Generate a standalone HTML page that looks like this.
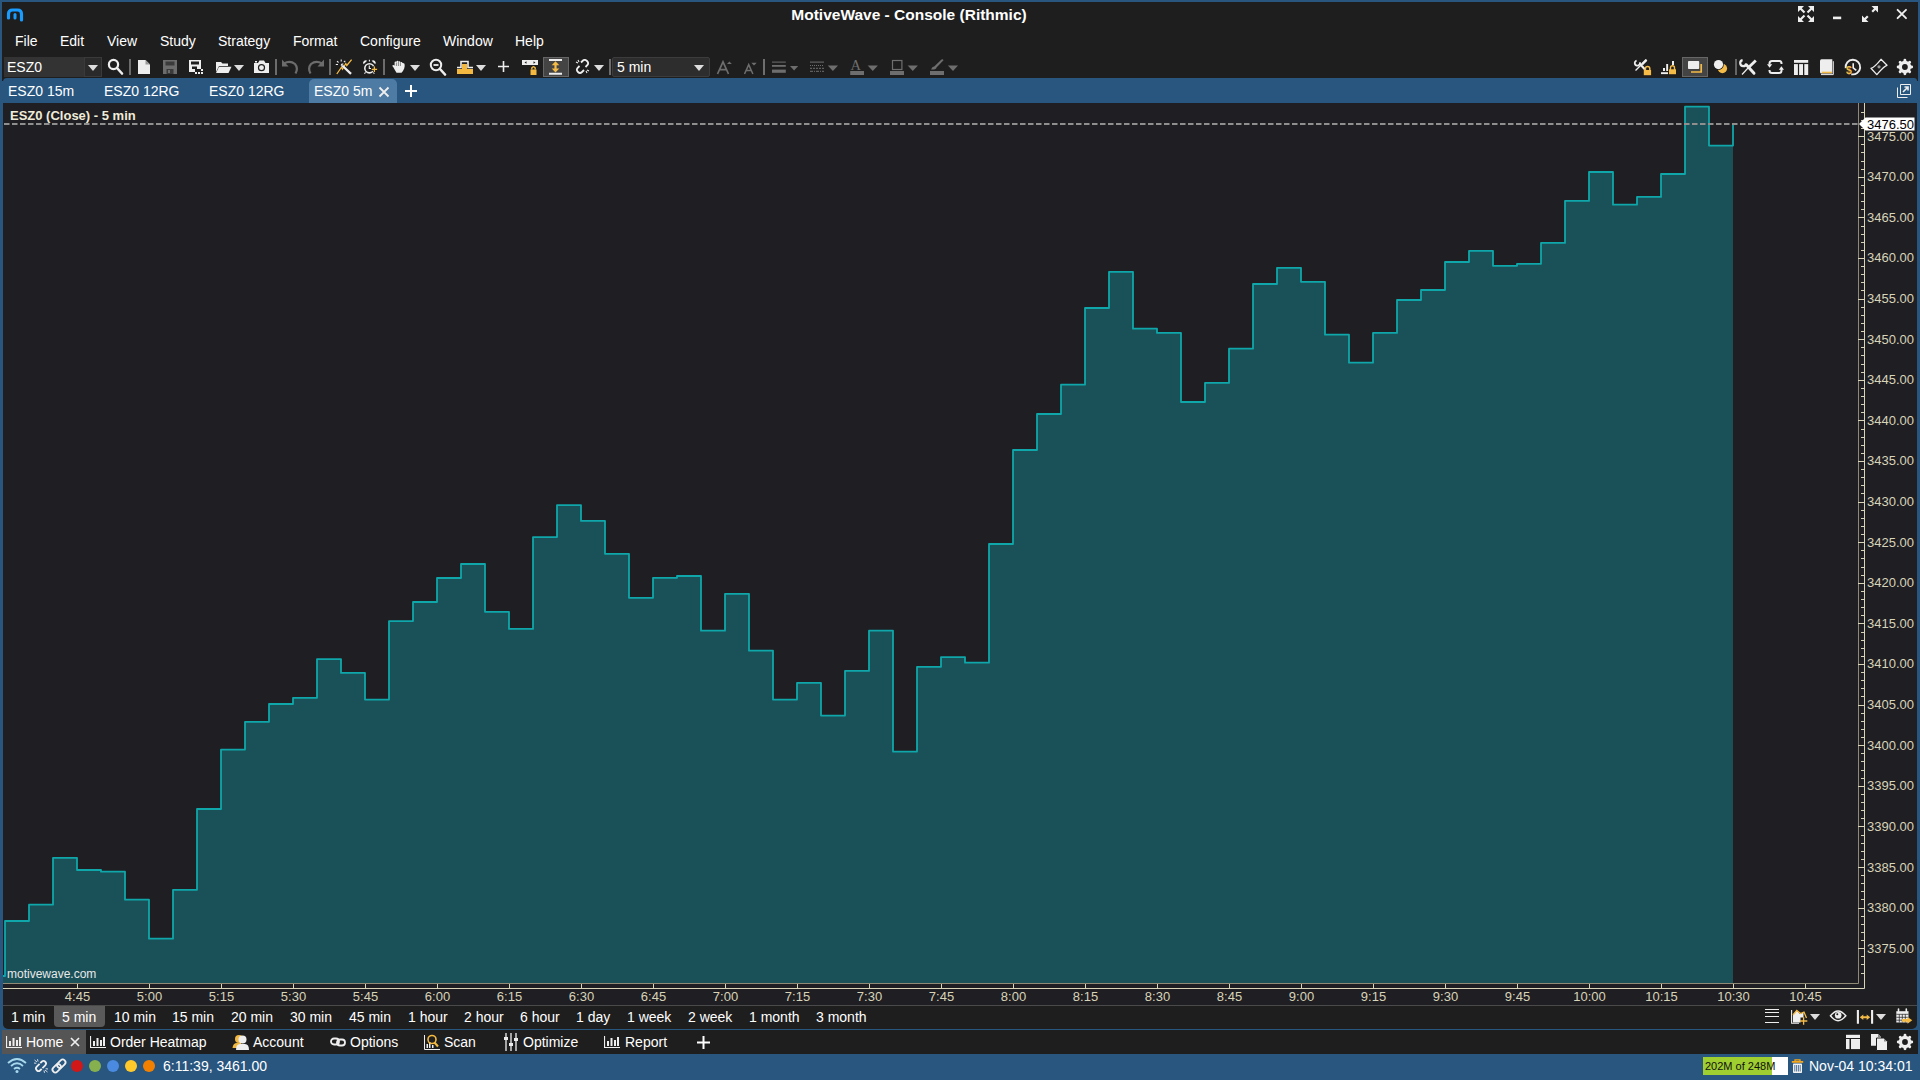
<!DOCTYPE html>
<html><head><meta charset="utf-8"><style>
html,body{margin:0;padding:0;}
body{width:1920px;height:1080px;overflow:hidden;background:#28567f;position:relative;font-family:'Liberation Sans', sans-serif;}
.t{position:absolute;white-space:nowrap;}
.b{position:absolute;}
</style></head><body>
<div class="b" style="left:2px;top:2px;width:1916px;height:79px;background:#1e1e1e;"></div>
<div class="b" style="left:3px;top:78px;width:1914px;height:25px;background:#28567f;border-top-left-radius:4px;border-top-right-radius:3px;"></div>
<div class="b" style="left:3px;top:103px;width:1914px;height:902px;background:#1f1e23;"></div>
<div class="b" style="left:3px;top:1005px;width:1914px;height:24px;background:#1e1e1e;border-bottom-left-radius:5px;border-bottom-right-radius:5px;border-top:1px solid #4a4a4a;box-sizing:border-box;"></div>
<div class="b" style="left:2px;top:1030px;width:1916px;height:24px;background:#1e1e1e;"></div>
<svg class="b" style="left:6px;top:8px" width="18" height="15" viewBox="0 0 18 15"><path d="M2.5 10 V6 Q2.5 2 6.5 2 H11.5 Q15.5 2 15.5 6 V12" fill="none" stroke="#1a9cff" stroke-width="3.2" stroke-linecap="round"/><path d="M9 6.5 V10" stroke="#1a9cff" stroke-width="3" stroke-linecap="round"/></svg>
<div class="t" style="left:0;width:1818px;text-align:center;top:7px;font-size:15.5px;line-height:15.5px;font-weight:bold;color:#fff">MotiveWave - Console (Rithmic)</div>
<div class="t" style="left:15px;top:34px;font-size:14px;line-height:14px;color:#fff;">File</div>
<div class="t" style="left:60px;top:34px;font-size:14px;line-height:14px;color:#fff;">Edit</div>
<div class="t" style="left:107px;top:34px;font-size:14px;line-height:14px;color:#fff;">View</div>
<div class="t" style="left:160px;top:34px;font-size:14px;line-height:14px;color:#fff;">Study</div>
<div class="t" style="left:218px;top:34px;font-size:14px;line-height:14px;color:#fff;">Strategy</div>
<div class="t" style="left:293px;top:34px;font-size:14px;line-height:14px;color:#fff;">Format</div>
<div class="t" style="left:360px;top:34px;font-size:14px;line-height:14px;color:#fff;">Configure</div>
<div class="t" style="left:443px;top:34px;font-size:14px;line-height:14px;color:#fff;">Window</div>
<div class="t" style="left:515px;top:34px;font-size:14px;line-height:14px;color:#fff;">Help</div>
<div class="b" style="left:4px;top:57px;width:80px;height:20px;background:#333;"></div>
<div class="t" style="left:7px;top:60px;font-size:14px;line-height:14px;color:#fff;">ESZ0</div>
<div class="b" style="left:84px;top:57px;width:18px;height:20px;background:#2a2a2a;border:1px solid #3a3a3a;box-sizing:border-box;"></div>
<svg class="b" style="left:88px;top:65px" width="10" height="6" viewBox="0 0 10 6"><path d="M0 0H10L5 6z" fill="#ddd"/></svg>
<svg class="b" style="left:107px;top:58px" width="17" height="18" viewBox="0 0 17 18"><circle cx="6.5" cy="6.5" r="4.6" fill="none" stroke="#eee" stroke-width="2.2"/><path d="M10 10l5 5.5" stroke="#eee" stroke-width="2.6" stroke-linecap="round"/></svg>
<div class="b" style="left:129px;top:59px;width:2px;height:16px;background:#6c6c6c;"></div>
<svg class="b" style="left:137px;top:59px" width="14" height="16" viewBox="0 0 14 16"><path d="M1 1H8.5L13 5.5V15H1z" fill="#eee"/><path d="M8.5 1V5.5H13" fill="#999"/></svg>
<svg class="b" style="left:162px;top:59px" width="16" height="16" viewBox="0 0 16 16"><path d="M1 1H15V15H1z" fill="#6c6c6c"/><path d="M3.5 2.5H12.5V6.5H3.5z" fill="#3a3a3a"/><path d="M4.5 10H11.5V15H4.5z" fill="#3a3a3a"/><path d="M6 11H8V14H6z" fill="#6c6c6c"/></svg>
<svg class="b" style="left:188px;top:59px" width="16" height="16" viewBox="0 0 16 16"><path d="M1 1H13V10H1z" fill="#eee"/><path d="M3 2.5H11V5.5H3z" fill="#1e1e1e"/><path d="M4 7.5H9V10H4z" fill="#1e1e1e"/><path d="M1 10H7V13H1z" fill="#eee"/><rect x="7" y="13" width="2" height="2" fill="#eee"/><rect x="10" y="13" width="2" height="2" fill="#eee"/><rect x="13" y="13" width="2" height="2" fill="#eee"/><rect x="13" y="10" width="2" height="2" fill="#eee"/></svg>
<svg class="b" style="left:215px;top:60px" width="17" height="14" viewBox="0 0 17 14"><path d="M1 2H6L7.5 3.5H13V6H4L1 12z" fill="#eee"/><path d="M4 6.8H16.5L13.5 13H1z" fill="#eee"/></svg>
<svg class="b" style="left:234px;top:65px" width="10" height="6" viewBox="0 0 10 6"><path d="M0 0H10L5 6z" fill="#ddd"/></svg>
<svg class="b" style="left:253px;top:59px" width="17" height="15" viewBox="0 0 17 15"><path d="M1 4H5L6.5 1.5H11L12.5 4H16V14H1z" fill="#eee"/><circle cx="8.5" cy="8.7" r="3.6" fill="#1e1e1e"/><circle cx="8.5" cy="8.7" r="2.4" fill="#eee"/><rect x="2" y="2" width="2" height="1.5" fill="#eee"/></svg>
<div class="b" style="left:275px;top:59px;width:2px;height:16px;background:#6c6c6c;"></div>
<svg class="b" style="left:281px;top:58px" width="18" height="18" viewBox="0 0 18 18"><path d="M3 5.5Q9 2 14 6Q17.5 10 14.5 15.5" fill="none" stroke="#6c6c6c" stroke-width="2.2"/><path d="M1 1.5V8.5H7.5z" fill="#6c6c6c"/></svg>
<svg class="b" style="left:307px;top:58px" width="18" height="18" viewBox="0 0 18 18"><path d="M15 5.5Q9 2 4 6Q0.5 10 3.5 15.5" fill="none" stroke="#6c6c6c" stroke-width="2.2"/><path d="M17 1.5V8.5H10.5z" fill="#6c6c6c"/></svg>
<div class="b" style="left:329px;top:59px;width:2px;height:16px;background:#6c6c6c;"></div>
<div class="b" style="left:383px;top:59px;width:2px;height:16px;background:#6c6c6c;"></div>
<svg class="b" style="left:410px;top:65px" width="10" height="6" viewBox="0 0 10 6"><path d="M0 0H10L5 6z" fill="#ddd"/></svg>
<svg class="b" style="left:429px;top:58px" width="18" height="18" viewBox="0 0 18 18"><circle cx="7" cy="7" r="5.2" fill="none" stroke="#eee" stroke-width="2"/><path d="M4.5 7H9.5" stroke="#eee" stroke-width="1.8"/><path d="M11 11L16 16.5" stroke="#eee" stroke-width="2.6" stroke-linecap="round"/></svg>
<svg class="b" style="left:456px;top:59px" width="18" height="16" viewBox="0 0 18 16"><path d="M1 8.5H5V2.5H12V8.5H17" fill="none" stroke="#eee" stroke-width="1.6"/><path d="M6 5H11V10H17V15H1V10H6z" fill="#f2b840"/></svg>
<svg class="b" style="left:476px;top:65px" width="10" height="6" viewBox="0 0 10 6"><path d="M0 0H10L5 6z" fill="#ddd"/></svg>
<svg class="b" style="left:497px;top:60px" width="13" height="13" viewBox="0 0 13 13"><path d="M6.5 1V12M1 6.5H12" stroke="#eee" stroke-width="1.6"/></svg>
<svg class="b" style="left:521px;top:59px" width="18" height="17" viewBox="0 0 18 17"><path d="M1 1H17V6H1z" fill="#eee"/><path d="M3.5 3.5L5.5 2.3V4.7zM14.5 3.5L12.5 2.3V4.7z" fill="#1e1e1e"/><path d="M9.5 10.5H15.5V16H9.5z" fill="#f2b840"/><path d="M10.8 10.5V9Q12.5 6.5 14.2 9V10.5" fill="none" stroke="#f2b840" stroke-width="1.4"/></svg>
<div class="b" style="left:543px;top:57px;width:26px;height:20px;background:#444;border:1px solid #666;box-sizing:border-box;"></div>
<svg class="b" style="left:575px;top:59px" width="15" height="15" viewBox="0 0 15 15"><path d="M6 3.5L8 1.5Q10 0 12 2Q14 4 12.5 6L10.5 8M4.5 7L2.5 9Q1 11 3 13Q5 15 7 13L9 11" fill="none" stroke="#eee" stroke-width="1.8"/><path d="M1 3L3 4M3 1L4 3M14 12L12 11M12 14L11 12" stroke="#eee" stroke-width="1.1"/></svg>
<svg class="b" style="left:594px;top:65px" width="10" height="6" viewBox="0 0 10 6"><path d="M0 0H10L5 6z" fill="#ddd"/></svg>
<div class="b" style="left:609px;top:59px;width:2px;height:16px;background:#6c6c6c;"></div>
<div class="b" style="left:612px;top:57px;width:98px;height:20px;background:#2d2d2d;border:1px solid #3c3c3c;border-radius:2px;box-sizing:border-box;"></div>
<div class="t" style="left:617px;top:60px;font-size:14px;line-height:14px;color:#fff;">5 min</div>
<svg class="b" style="left:694px;top:65px" width="10" height="6" viewBox="0 0 10 6"><path d="M0 0H10L5 6z" fill="#ddd"/></svg>
<div class="b" style="left:1682px;top:57px;width:26px;height:20px;background:#444;border:1px solid #666;box-sizing:border-box;"></div>
<div class="b" style="left:1735px;top:59px;width:2px;height:16px;background:#666;"></div>
<div class="t" style="left:8px;top:84px;font-size:14px;line-height:14px;color:#fff;">ESZ0 15m</div>
<div class="t" style="left:104px;top:84px;font-size:14px;line-height:14px;color:#fff;">ESZ0 12RG</div>
<div class="t" style="left:209px;top:84px;font-size:14px;line-height:14px;color:#fff;">ESZ0 12RG</div>
<div class="b" style="left:309px;top:79px;width:88px;height:24px;background:#4e7ba3;border-radius:5px 5px 0 0;"></div>
<div class="t" style="left:314px;top:84px;font-size:14px;line-height:14px;color:#fff;">ESZ0 5m</div>
<svg class="b" style="left:378px;top:86px" width="12" height="12" viewBox="0 0 12 12"><path d="M1.5 1.5L10.5 10.5M10.5 1.5L1.5 10.5" stroke="#eee" stroke-width="1.8"/></svg>
<svg class="b" style="left:404px;top:84px" width="14" height="14" viewBox="0 0 14 14"><path d="M7 1V13M1 7H13" stroke="#fff" stroke-width="2"/></svg>
<svg class="b" style="left:1897px;top:84px" width="14" height="14" viewBox="0 0 14 14"><path d="M3.5 0.5H13.5V10.5H3.5z" fill="none" stroke="#eee" stroke-width="1"/><path d="M0.5 3.5V13.5H10.5" fill="none" stroke="#eee" stroke-width="1"/><path d="M6 8L11 3M7.5 3H11V6.5" fill="none" stroke="#eee" stroke-width="1.6"/></svg>
<svg class="b" style="left:0;top:0" width="1920" height="1080"><path d="M3 983 V976 H5 V921 H29 V904.7 H53 V857.8 H77 V870 H101 V871.7 H125 V899.7 H149 V938.7 H173 V889.8 H197 V809 H221 V749.6 H245 V721.8 H269 V704 H293 V697.8 H317 V659.1 H341 V672.9 H365 V699.6 H389 V621.1 H413 V602 H437 V578 H461 V564 H485 V611.8 H509 V628.9 H533 V537.1 H557 V505.1 H581 V520.9 H605 V553.8 H629 V597.8 H653 V577.8 H677 V576 H701 V630.7 H725 V593.8 H749 V650.7 H773 V699.6 H797 V682.9 H821 V715.6 H845 V670.9 H869 V630.7 H893 V751.6 H917 V666.8 H941 V657.1 H965 V662.7 H989 V544 H1013 V450 H1037 V414 H1061 V384.7 H1085 V308 H1109 V271.8 H1133 V328.7 H1157 V332.9 H1181 V402 H1205 V382.9 H1229 V348.7 H1253 V284 H1277 V267.8 H1301 V281.8 H1325 V334.7 H1349 V362.7 H1373 V332.9 H1397 V300 H1421 V290 H1445 V262 H1469 V250.9 H1493 V265.8 H1517 V263.8 H1541 V242.9 H1565 V200.9 H1589 V172 H1613 V204.7 H1637 V196.9 H1661 V174 H1685 V106.7 H1709 V145.6 H1733 V983 Z" fill="#1a5159"/><path d="M3 976 H5 V921 H29 V904.7 H53 V857.8 H77 V870 H101 V871.7 H125 V899.7 H149 V938.7 H173 V889.8 H197 V809 H221 V749.6 H245 V721.8 H269 V704 H293 V697.8 H317 V659.1 H341 V672.9 H365 V699.6 H389 V621.1 H413 V602 H437 V578 H461 V564 H485 V611.8 H509 V628.9 H533 V537.1 H557 V505.1 H581 V520.9 H605 V553.8 H629 V597.8 H653 V577.8 H677 V576 H701 V630.7 H725 V593.8 H749 V650.7 H773 V699.6 H797 V682.9 H821 V715.6 H845 V670.9 H869 V630.7 H893 V751.6 H917 V666.8 H941 V657.1 H965 V662.7 H989 V544 H1013 V450 H1037 V414 H1061 V384.7 H1085 V308 H1109 V271.8 H1133 V328.7 H1157 V332.9 H1181 V402 H1205 V382.9 H1229 V348.7 H1253 V284 H1277 V267.8 H1301 V281.8 H1325 V334.7 H1349 V362.7 H1373 V332.9 H1397 V300 H1421 V290 H1445 V262 H1469 V250.9 H1493 V265.8 H1517 V263.8 H1541 V242.9 H1565 V200.9 H1589 V172 H1613 V204.7 H1637 V196.9 H1661 V174 H1685 V106.7 H1709 V145.6 H1733 V124" fill="none" stroke="#0fa7aa" stroke-width="1.8" stroke-linejoin="round"/><path d="M4 124H1858" stroke="#8f8f8f" stroke-width="1.8" stroke-dasharray="5.5 2.5"/><path d="M3 983.5H1858.5V103" fill="none" stroke="#8e8a75" stroke-width="1"/><path d="M3 988.5H1864.5V103" fill="none" stroke="#d8d4b8" stroke-width="1"/><path d="M77.5 984V988 M149.5 984V988 M221.5 984V988 M293.5 984V988 M365.5 984V988 M437.5 984V988 M509.5 984V988 M581.5 984V988 M653.5 984V988 M725.5 984V988 M797.5 984V988 M869.5 984V988 M941.5 984V988 M1013.5 984V988 M1085.5 984V988 M1157.5 984V988 M1229.5 984V988 M1301.5 984V988 M1373.5 984V988 M1445.5 984V988 M1517.5 984V988 M1589.5 984V988 M1661.5 984V988 M1733.5 984V988 M1805.5 984V988 " stroke="#d8d4b8" stroke-width="1"/><path d="M1861 112.5H1864 M1861 120.5H1864 M1861 128.5H1864 M1858 136.5H1864 M1861 144.5H1864 M1861 152.5H1864 M1861 161.5H1864 M1861 169.5H1864 M1858 177.5H1864 M1861 185.5H1864 M1861 193.5H1864 M1861 201.5H1864 M1861 209.5H1864 M1858 217.5H1864 M1861 226.5H1864 M1861 234.5H1864 M1861 242.5H1864 M1861 250.5H1864 M1858 258.5H1864 M1861 266.5H1864 M1861 274.5H1864 M1861 282.5H1864 M1861 290.5H1864 M1858 299.5H1864 M1861 307.5H1864 M1861 315.5H1864 M1861 323.5H1864 M1861 331.5H1864 M1858 339.5H1864 M1861 347.5H1864 M1861 355.5H1864 M1861 364.5H1864 M1861 372.5H1864 M1858 380.5H1864 M1861 388.5H1864 M1861 396.5H1864 M1861 404.5H1864 M1861 412.5H1864 M1858 420.5H1864 M1861 429.5H1864 M1861 437.5H1864 M1861 445.5H1864 M1861 453.5H1864 M1858 461.5H1864 M1861 469.5H1864 M1861 477.5H1864 M1861 485.5H1864 M1861 493.5H1864 M1858 502.5H1864 M1861 510.5H1864 M1861 518.5H1864 M1861 526.5H1864 M1861 534.5H1864 M1858 542.5H1864 M1861 550.5H1864 M1861 558.5H1864 M1861 567.5H1864 M1861 575.5H1864 M1858 583.5H1864 M1861 591.5H1864 M1861 599.5H1864 M1861 607.5H1864 M1861 615.5H1864 M1858 623.5H1864 M1861 632.5H1864 M1861 640.5H1864 M1861 648.5H1864 M1861 656.5H1864 M1858 664.5H1864 M1861 672.5H1864 M1861 680.5H1864 M1861 688.5H1864 M1861 696.5H1864 M1858 705.5H1864 M1861 713.5H1864 M1861 721.5H1864 M1861 729.5H1864 M1861 737.5H1864 M1858 745.5H1864 M1861 753.5H1864 M1861 761.5H1864 M1861 770.5H1864 M1861 778.5H1864 M1858 786.5H1864 M1861 794.5H1864 M1861 802.5H1864 M1861 810.5H1864 M1861 818.5H1864 M1858 826.5H1864 M1861 835.5H1864 M1861 843.5H1864 M1861 851.5H1864 M1861 859.5H1864 M1858 867.5H1864 M1861 875.5H1864 M1861 883.5H1864 M1861 891.5H1864 M1861 899.5H1864 M1858 908.5H1864 M1861 916.5H1864 M1861 924.5H1864 M1861 932.5H1864 M1861 940.5H1864 M1858 948.5H1864 M1861 956.5H1864 M1861 964.5H1864 M1861 973.5H1864 " stroke="#d8d4b8" stroke-width="1"/></svg>
<div class="t" style="left:10px;top:109px;font-size:13px;line-height:13px;color:#f0ecd8;font-weight:bold;">ESZ0 (Close) - 5 min</div>
<div class="t" style="left:7px;top:968px;font-size:12px;line-height:12px;color:#e8e8e8;">motivewave.com</div>
<div class="t" style="left:1867px;top:130px;font-size:13px;line-height:13px;color:#d8d4b8;">3475.00</div>
<div class="t" style="left:1867px;top:170px;font-size:13px;line-height:13px;color:#d8d4b8;">3470.00</div>
<div class="t" style="left:1867px;top:211px;font-size:13px;line-height:13px;color:#d8d4b8;">3465.00</div>
<div class="t" style="left:1867px;top:251px;font-size:13px;line-height:13px;color:#d8d4b8;">3460.00</div>
<div class="t" style="left:1867px;top:292px;font-size:13px;line-height:13px;color:#d8d4b8;">3455.00</div>
<div class="t" style="left:1867px;top:333px;font-size:13px;line-height:13px;color:#d8d4b8;">3450.00</div>
<div class="t" style="left:1867px;top:373px;font-size:13px;line-height:13px;color:#d8d4b8;">3445.00</div>
<div class="t" style="left:1867px;top:414px;font-size:13px;line-height:13px;color:#d8d4b8;">3440.00</div>
<div class="t" style="left:1867px;top:454px;font-size:13px;line-height:13px;color:#d8d4b8;">3435.00</div>
<div class="t" style="left:1867px;top:495px;font-size:13px;line-height:13px;color:#d8d4b8;">3430.00</div>
<div class="t" style="left:1867px;top:536px;font-size:13px;line-height:13px;color:#d8d4b8;">3425.00</div>
<div class="t" style="left:1867px;top:576px;font-size:13px;line-height:13px;color:#d8d4b8;">3420.00</div>
<div class="t" style="left:1867px;top:617px;font-size:13px;line-height:13px;color:#d8d4b8;">3415.00</div>
<div class="t" style="left:1867px;top:657px;font-size:13px;line-height:13px;color:#d8d4b8;">3410.00</div>
<div class="t" style="left:1867px;top:698px;font-size:13px;line-height:13px;color:#d8d4b8;">3405.00</div>
<div class="t" style="left:1867px;top:739px;font-size:13px;line-height:13px;color:#d8d4b8;">3400.00</div>
<div class="t" style="left:1867px;top:779px;font-size:13px;line-height:13px;color:#d8d4b8;">3395.00</div>
<div class="t" style="left:1867px;top:820px;font-size:13px;line-height:13px;color:#d8d4b8;">3390.00</div>
<div class="t" style="left:1867px;top:861px;font-size:13px;line-height:13px;color:#d8d4b8;">3385.00</div>
<div class="t" style="left:1867px;top:901px;font-size:13px;line-height:13px;color:#d8d4b8;">3380.00</div>
<div class="t" style="left:1867px;top:942px;font-size:13px;line-height:13px;color:#d8d4b8;">3375.00</div>
<svg class="b" style="left:1859px;top:117px" width="57" height="15" viewBox="0 0 57 15"><path d="M0 7L6.5 0.5H55.5V13.5H6.5z" fill="#fff"/></svg>
<div class="t" style="left:1867px;top:118px;font-size:13px;line-height:13px;color:#000;">3476.50</div>
<div class="t" style="left:37.5px;width:80px;text-align:center;top:990px;font-size:13px;line-height:13px;color:#d8d4b8">4:45</div>
<div class="t" style="left:109.5px;width:80px;text-align:center;top:990px;font-size:13px;line-height:13px;color:#d8d4b8">5:00</div>
<div class="t" style="left:181.5px;width:80px;text-align:center;top:990px;font-size:13px;line-height:13px;color:#d8d4b8">5:15</div>
<div class="t" style="left:253.5px;width:80px;text-align:center;top:990px;font-size:13px;line-height:13px;color:#d8d4b8">5:30</div>
<div class="t" style="left:325.5px;width:80px;text-align:center;top:990px;font-size:13px;line-height:13px;color:#d8d4b8">5:45</div>
<div class="t" style="left:397.5px;width:80px;text-align:center;top:990px;font-size:13px;line-height:13px;color:#d8d4b8">6:00</div>
<div class="t" style="left:469.5px;width:80px;text-align:center;top:990px;font-size:13px;line-height:13px;color:#d8d4b8">6:15</div>
<div class="t" style="left:541.5px;width:80px;text-align:center;top:990px;font-size:13px;line-height:13px;color:#d8d4b8">6:30</div>
<div class="t" style="left:613.5px;width:80px;text-align:center;top:990px;font-size:13px;line-height:13px;color:#d8d4b8">6:45</div>
<div class="t" style="left:685.5px;width:80px;text-align:center;top:990px;font-size:13px;line-height:13px;color:#d8d4b8">7:00</div>
<div class="t" style="left:757.5px;width:80px;text-align:center;top:990px;font-size:13px;line-height:13px;color:#d8d4b8">7:15</div>
<div class="t" style="left:829.5px;width:80px;text-align:center;top:990px;font-size:13px;line-height:13px;color:#d8d4b8">7:30</div>
<div class="t" style="left:901.5px;width:80px;text-align:center;top:990px;font-size:13px;line-height:13px;color:#d8d4b8">7:45</div>
<div class="t" style="left:973.5px;width:80px;text-align:center;top:990px;font-size:13px;line-height:13px;color:#d8d4b8">8:00</div>
<div class="t" style="left:1045.5px;width:80px;text-align:center;top:990px;font-size:13px;line-height:13px;color:#d8d4b8">8:15</div>
<div class="t" style="left:1117.5px;width:80px;text-align:center;top:990px;font-size:13px;line-height:13px;color:#d8d4b8">8:30</div>
<div class="t" style="left:1189.5px;width:80px;text-align:center;top:990px;font-size:13px;line-height:13px;color:#d8d4b8">8:45</div>
<div class="t" style="left:1261.5px;width:80px;text-align:center;top:990px;font-size:13px;line-height:13px;color:#d8d4b8">9:00</div>
<div class="t" style="left:1333.5px;width:80px;text-align:center;top:990px;font-size:13px;line-height:13px;color:#d8d4b8">9:15</div>
<div class="t" style="left:1405.5px;width:80px;text-align:center;top:990px;font-size:13px;line-height:13px;color:#d8d4b8">9:30</div>
<div class="t" style="left:1477.5px;width:80px;text-align:center;top:990px;font-size:13px;line-height:13px;color:#d8d4b8">9:45</div>
<div class="t" style="left:1549.5px;width:80px;text-align:center;top:990px;font-size:13px;line-height:13px;color:#d8d4b8">10:00</div>
<div class="t" style="left:1621.5px;width:80px;text-align:center;top:990px;font-size:13px;line-height:13px;color:#d8d4b8">10:15</div>
<div class="t" style="left:1693.5px;width:80px;text-align:center;top:990px;font-size:13px;line-height:13px;color:#d8d4b8">10:30</div>
<div class="t" style="left:1765.5px;width:80px;text-align:center;top:990px;font-size:13px;line-height:13px;color:#d8d4b8">10:45</div>
<div class="b" style="left:54px;top:1006px;width:51px;height:21px;background:#5a5a5a;border-radius:0 0 4px 4px;"></div>
<div class="t" style="left:11px;top:1010px;font-size:14px;line-height:14px;color:#fff;">1 min</div>
<div class="t" style="left:62px;top:1010px;font-size:14px;line-height:14px;color:#fff;">5 min</div>
<div class="t" style="left:114px;top:1010px;font-size:14px;line-height:14px;color:#fff;">10 min</div>
<div class="t" style="left:172px;top:1010px;font-size:14px;line-height:14px;color:#fff;">15 min</div>
<div class="t" style="left:231px;top:1010px;font-size:14px;line-height:14px;color:#fff;">20 min</div>
<div class="t" style="left:290px;top:1010px;font-size:14px;line-height:14px;color:#fff;">30 min</div>
<div class="t" style="left:349px;top:1010px;font-size:14px;line-height:14px;color:#fff;">45 min</div>
<div class="t" style="left:408px;top:1010px;font-size:14px;line-height:14px;color:#fff;">1 hour</div>
<div class="t" style="left:464px;top:1010px;font-size:14px;line-height:14px;color:#fff;">2 hour</div>
<div class="t" style="left:520px;top:1010px;font-size:14px;line-height:14px;color:#fff;">6 hour</div>
<div class="t" style="left:576px;top:1010px;font-size:14px;line-height:14px;color:#fff;">1 day</div>
<div class="t" style="left:627px;top:1010px;font-size:14px;line-height:14px;color:#fff;">1 week</div>
<div class="t" style="left:688px;top:1010px;font-size:14px;line-height:14px;color:#fff;">2 week</div>
<div class="t" style="left:749px;top:1010px;font-size:14px;line-height:14px;color:#fff;">1 month</div>
<div class="t" style="left:816px;top:1010px;font-size:14px;line-height:14px;color:#fff;">3 month</div>
<svg class="b" style="left:1810px;top:1014px" width="10" height="6" viewBox="0 0 10 6"><path d="M0 0H10L5 6z" fill="#ddd"/></svg>
<svg class="b" style="left:1876px;top:1014px" width="10" height="6" viewBox="0 0 10 6"><path d="M0 0H10L5 6z" fill="#ddd"/></svg>
<div class="b" style="left:2px;top:1030px;width:84px;height:24px;background:#555;"></div>
<svg class="b" style="left:6px;top:1036px" width="16" height="12" viewBox="0 0 16 12"><path d="M0.5 0V11.5H16" fill="none" stroke="#eee" stroke-width="1.2"/><rect x="3" y="5" width="2" height="5" fill="#eee"/><rect x="6.5" y="2" width="2" height="8" fill="#eee"/><rect x="10" y="4" width="2" height="6" fill="#eee"/><rect x="13" y="1" width="2" height="9" fill="#eee"/></svg>
<div class="t" style="left:26px;top:1035px;font-size:14px;line-height:14px;color:#fff;">Home</div>
<svg class="b" style="left:70px;top:1037px" width="10" height="10" viewBox="0 0 10 10"><path d="M1 1L9 9M9 1L1 9" stroke="#eee" stroke-width="1.7"/></svg>
<svg class="b" style="left:90px;top:1036px" width="16" height="12" viewBox="0 0 16 12"><path d="M0.5 0V11.5H16" fill="none" stroke="#eee" stroke-width="1.2"/><rect x="3" y="5" width="2" height="5" fill="#eee"/><rect x="6.5" y="2" width="2" height="8" fill="#eee"/><rect x="10" y="4" width="2" height="6" fill="#eee"/><rect x="13" y="1" width="2" height="9" fill="#eee"/></svg>
<div class="t" style="left:110px;top:1035px;font-size:14px;line-height:14px;color:#fff;">Order Heatmap</div>
<svg class="b" style="left:232px;top:1034px" width="18" height="16" viewBox="0 0 18 16"><circle cx="7" cy="5" r="4" fill="#f2b840"/><path d="M0.5 14Q1 9 5 9H9Q10 11 8 14z" fill="#f2b840"/><circle cx="10.5" cy="5.5" r="4" fill="#eee"/><path d="M4 16Q4 10 8 10H13Q17 10 17 16z" fill="#eee"/></svg>
<div class="t" style="left:253px;top:1035px;font-size:14px;line-height:14px;color:#fff;">Account</div>
<svg class="b" style="left:330px;top:1036px" width="16" height="12" viewBox="0 0 16 12"><rect x="1" y="2.5" width="8" height="6" rx="3" fill="none" stroke="#eee" stroke-width="1.8"/><rect x="7" y="3.5" width="8" height="6" rx="3" fill="none" stroke="#eee" stroke-width="1.8"/></svg>
<div class="t" style="left:350px;top:1035px;font-size:14px;line-height:14px;color:#fff;">Options</div>
<svg class="b" style="left:424px;top:1034px" width="16" height="16" viewBox="0 0 16 16"><path d="M0.5 1V15.5H16" fill="none" stroke="#eee" stroke-width="1"/><rect x="2.5" y="10" width="1.5" height="4" fill="#eee"/><rect x="5" y="8" width="1.5" height="6" fill="#eee"/><rect x="8" y="11" width="1.5" height="3" fill="#eee"/><circle cx="8" cy="5.5" r="4" fill="none" stroke="#f2b840" stroke-width="1.6"/><path d="M10.5 8.5L14 12.5" stroke="#f2b840" stroke-width="2"/></svg>
<div class="t" style="left:444px;top:1035px;font-size:14px;line-height:14px;color:#fff;">Scan</div>
<svg class="b" style="left:504px;top:1033px" width="14" height="18" viewBox="0 0 14 18"><path d="M2 0V18M7 0V18M12 0V18" stroke="#eee" stroke-width="1.3"/><rect x="0" y="4" width="4" height="3" fill="#eee"/><rect x="5" y="10" width="4" height="3" fill="#eee"/><rect x="10" y="5" width="4" height="3" fill="#eee"/></svg>
<div class="t" style="left:523px;top:1035px;font-size:14px;line-height:14px;color:#fff;">Optimize</div>
<svg class="b" style="left:604px;top:1036px" width="16" height="12" viewBox="0 0 16 12"><path d="M0.5 0V11.5H16" fill="none" stroke="#eee" stroke-width="1.2"/><rect x="3" y="5" width="2" height="5" fill="#eee"/><rect x="6.5" y="2" width="2" height="8" fill="#eee"/><rect x="10" y="4" width="2" height="6" fill="#eee"/><rect x="13" y="1" width="2" height="9" fill="#eee"/></svg>
<div class="t" style="left:625px;top:1035px;font-size:14px;line-height:14px;color:#fff;">Report</div>
<svg class="b" style="left:697px;top:1036px" width="13" height="13" viewBox="0 0 13 13"><path d="M6.5 0V13M0 6.5H13" stroke="#fff" stroke-width="2"/></svg>
<svg class="b" style="left:7px;top:1058px" width="20" height="15" viewBox="0 0 20 15"><path d="M1 5Q10 -3 19 5M4 8Q10 2.5 16 8M7 11Q10 8.5 13 11" fill="none" stroke="#a8d8ec" stroke-width="1.8"/><circle cx="10" cy="13.5" r="1.5" fill="#a8d8ec"/></svg>
<svg class="b" style="left:71px;top:1060px" width="12" height="12"><circle cx="6" cy="6" r="6" fill="#d01818"/></svg>
<svg class="b" style="left:89px;top:1060px" width="12" height="12"><circle cx="6" cy="6" r="6" fill="#86b04e"/></svg>
<svg class="b" style="left:107px;top:1060px" width="12" height="12"><circle cx="6" cy="6" r="6" fill="#4a8ae0"/></svg>
<svg class="b" style="left:125px;top:1060px" width="12" height="12"><circle cx="6" cy="6" r="6" fill="#ffc92c"/></svg>
<svg class="b" style="left:143px;top:1060px" width="12" height="12"><circle cx="6" cy="6" r="6" fill="#f28000"/></svg>
<div class="t" style="left:163px;top:1059px;font-size:14px;line-height:14px;color:#fff;">6:11:39, 3461.00</div>
<div class="b" style="left:1703px;top:1057px;width:85px;height:18px;background:#fff;"></div>
<div class="b" style="left:1703px;top:1057px;width:69px;height:18px;background:#9fce31;"></div>
<div class="t" style="left:1705px;top:1061px;font-size:11px;line-height:11px;color:#111;">202M of 248M</div>
<div class="t" style="left:1809px;top:1059px;font-size:14px;line-height:14px;color:#fff;">Nov-04 10:34:01</div>
<svg class="b" style="left:0;top:0" width="1920" height="1080"><path d="M1798 6H1804L1798 12z M1814 6V12L1808 6z M1798 22V16L1804 22z M1814 22H1808L1814 16z" fill="#eee"/><path d="M1800 8L1804.5 12.5M1812 8L1807.5 12.5M1800 20L1804.5 15.5M1812 20L1807.5 15.5" stroke="#eee" stroke-width="2.2"/><rect x="1833" y="16.6" width="8.2" height="2.6" fill="#eee"/><path d="M1878 6V12.5L1871.5 6z M1862 22V15.5L1868.5 22z" fill="#eee"/><path d="M1875.5 8.5L1872.2 11.8M1864.5 19.5L1867.8 16.2" stroke="#eee" stroke-width="2.2"/><path d="M1897.6 9.8L1906 18.2M1906 9.8L1897.6 18.2" stroke="#eee" stroke-width="1.9" stroke-linecap="round"/><path d="M336.8 74L341.5 67.2L342.5 69.2L345.8 63.5L346.8 65.5L351.6 59.6" fill="none" stroke="#f4bb47" stroke-width="1.3"/><path d="M342.2 65.5L351 73.8" stroke="#eee" stroke-width="2.3"/><path d="M341.5 65.8A1.2 1.2 0 0 1 343.3 64.3" fill="none" stroke="#eee" stroke-width="1.2"/><path d="M341.2 59.5V61.6M337 61.2L338.5 62.5M345.3 60.8L343.9 62.1M335.8 64.5H338" stroke="#eee" stroke-width="1.1"/><circle cx="369.4" cy="68.3" r="4.6" fill="none" stroke="#eee" stroke-width="1.6"/><path d="M363.5 64.3A2.6 2.6 0 0 1 367.2 60.8z M375.3 64.3A2.6 2.6 0 0 0 371.6 60.8z" fill="#eee"/><path d="M369.4 59.8V61.5M365.5 72.2L364.5 73.8M373.3 72.2L374.3 73.8" stroke="#eee" stroke-width="1.1"/><path d="M369.3 65.5V68.5H371" fill="none" stroke="#eee" stroke-width="1.1"/><path d="M374.4 66.3V72.3M371.4 69.3H377.4" stroke="#1e1e1e" stroke-width="3"/><path d="M374.4 66.6V72M371.7 69.3H377.1" stroke="#f4bb47" stroke-width="1.3"/><path d="M393.5 67.5Q392 66 392.5 65.3Q393.3 64.5 394.6 65.6V62.6Q394.6 61.6 395.5 61.6Q396.4 61.6 396.4 62.6V61.8Q396.4 60.8 397.4 60.8Q398.4 60.8 398.4 61.8V62.2Q398.4 61.2 399.4 61.2Q400.4 61.2 400.4 62.2V63Q400.4 62 401.4 62Q402.4 62 402.4 63Q403.5 62.8 404.5 63.8Q405 65.5 404.2 68.5Q403 71.5 401.5 72.8H396.5Q394.8 70 393.5 67.5z" fill="#eee"/><path d="M396.4 62.6V66M398.4 62V66M400.4 62.5V66" stroke="#1e1e1e" stroke-width="0.5"/><path d="M549 60H562M549 73.7H562" stroke="#eee" stroke-width="1.9"/><path d="M555.5 61.3L559.3 65.3H556.6V68.5H559.3L555.5 72.5L551.7 68.5H554.4V65.3H551.7z" fill="#f4bb47"/><path d="M717.5 74L723 61.8L728.5 74M719.6 69.6H726.4" fill="none" stroke="#6e6e6e" stroke-width="1.7"/><path d="M727 64H731.8L729.4 61.4z" fill="#6e6e6e"/><path d="M744.5 74L748.7 64.6L752.9 74M746.2 70.6H751.2" fill="none" stroke="#6e6e6e" stroke-width="1.5"/><path d="M751.3 62.8H756.7L754 65.5z" fill="#6e6e6e"/><rect x="763" y="59" width="2" height="16" fill="#6e6e6e"/><rect x="772" y="61.6" width="13.8" height="1" fill="#6e6e6e"/><rect x="772" y="65" width="13.8" height="1.8" fill="#6e6e6e"/><rect x="772" y="69.6" width="13.8" height="3.2" fill="#6e6e6e"/><path d="M790 65.9H798.2L794.1 70.5z" fill="#6e6e6e"/><rect x="810" y="61.6" width="14" height="1" fill="#6e6e6e"/><path d="M810 65.5H824" stroke="#6e6e6e" stroke-width="1" stroke-dasharray="1 1"/><path d="M810 68.3H824" stroke="#6e6e6e" stroke-width="1" stroke-dasharray="2 1"/><path d="M810 71.3H824" stroke="#6e6e6e" stroke-width="1" stroke-dasharray="3 1 1 1"/><path d="M827.8 65.5H838L832.9 71z" fill="#6e6e6e"/><text x="850.4" y="69.6" font-family="Liberation Serif" font-size="14.5" fill="#6e6e6e">A</text><rect x="850.2" y="71" width="13.8" height="4" fill="#6e6e6e"/><path d="M867.7 65.5H877.9L872.8 71z" fill="#6e6e6e"/><rect x="892.5" y="60.5" width="9.4" height="9" fill="none" stroke="#6e6e6e" stroke-width="1.2"/><rect x="890" y="71" width="14" height="4" fill="#6e6e6e"/><path d="M907.7 65.5H917.9L912.8 71z" fill="#6e6e6e"/><path d="M931 69.5Q932 66.5 934.5 66.2L941.5 59.6Q943 58.8 943.5 60.2L936.5 67.5Q936 70 931 69.5z" fill="#6e6e6e"/><rect x="930" y="71" width="14" height="4" fill="#6e6e6e"/><path d="M947.9 65.5H958L953 71z" fill="#6e6e6e"/><path d="M1635.5 70.5L1646.5 59.8" stroke="#eee" stroke-width="1.3"/><path d="M1642 64.3L1646.5 59.8" stroke="#eee" stroke-width="2.4"/><path d="M1636.6 60.6A2.6 2.6 0 1 0 1639.8 62.2" fill="none" stroke="#eee" stroke-width="1.8"/><path d="M1639.5 63.5L1645 69.5" stroke="#eee" stroke-width="2.2"/><rect x="1643.8" y="70" width="7.3" height="5.2" fill="#f4bb47"/><path d="M1645.4 70.5V68.6A2.2 2.2 0 0 1 1649.8 68.6V70.5" fill="none" stroke="#f4bb47" stroke-width="1.5"/><rect x="1661" y="72.2" width="7" height="1.9" fill="#eee"/><rect x="1663" y="68" width="2" height="3" fill="#eee"/><rect x="1666.2" y="64" width="1.9" height="7" fill="#eee"/><rect x="1672" y="61" width="2" height="4" fill="#eee"/><rect x="1669" y="69.3" width="7" height="4.9" fill="#f4bb47"/><path d="M1670.5 70V67.8A2 2 0 0 1 1674.5 67.8V70" fill="none" stroke="#f4bb47" stroke-width="1.4"/><path d="M1701.2 63.9V72H1691" fill="none" stroke="#f4bb47" stroke-width="1.7"/><rect x="1688" y="61" width="11.2" height="8" rx="0.8" fill="#eee"/><circle cx="1722.4" cy="68.5" r="4.7" fill="#f4bb47"/><circle cx="1718.5" cy="64.6" r="5.3" fill="#1e1e1e"/><circle cx="1718.5" cy="64.6" r="4.6" fill="#eee"/><path d="M1742 74.5L1748.5 67.5" stroke="#eee" stroke-width="1.2"/><path d="M1748.5 67.5L1755.8 60.5" stroke="#eee" stroke-width="2.8"/><path d="M1742.6 60.2A3 3 0 1 0 1746.2 63.5" fill="none" stroke="#eee" stroke-width="2.2"/><path d="M1746.5 65L1754 73.3" stroke="#eee" stroke-width="2.9" stroke-linecap="round"/><path d="M1769.5 64.5V63.5Q1769.5 61 1772 61H1779.5Q1781.5 61 1781.5 63.5V64 M1781.5 68.5V70.5Q1781.5 73 1779 73H1772Q1769.5 73 1769.5 70.5V70" fill="none" stroke="#eee" stroke-width="2"/><path d="M1767 64.3H1772.2L1769.6 67.8z M1778.8 69.7H1784L1781.4 66.2z" fill="#eee"/><rect x="1794" y="60" width="14.2" height="2.8" fill="#eee"/><rect x="1794" y="64.1" width="3.9" height="10.9" fill="#eee"/><rect x="1799.1" y="64.1" width="3.9" height="10.9" fill="#eee"/><rect x="1804.3" y="64.1" width="3.9" height="10.9" fill="#eee"/><path d="M1821.5 59.2H1832.3V73.5H1821.5Q1820 73.5 1820 72V60.7Q1820 59.2 1821.5 59.2z" fill="#eee"/><path d="M1833.3 61.2V74.6H1821" fill="none" stroke="#eee" stroke-width="1"/><rect x="1821.8" y="71.7" width="10.2" height="1.5" fill="#f4bb47"/><path d="M1845.7 68.2A7.3 7.3 0 1 1 1851.3 74.2" fill="none" stroke="#eee" stroke-width="1.9"/><path d="M1853.2 63.2V67.8L1856.3 70.3" fill="none" stroke="#eee" stroke-width="1.6"/><text x="1845.9" y="73.6" font-family="Liberation Sans" font-weight="bold" font-size="10.5" fill="#f4bb47">$</text><path d="M1881 59.3L1887 65.3C1884 66 1880 71 1876.8 74.6L1871 68.3C1874 67.5 1878 63 1881 59.3z" fill="none" stroke="#eee" stroke-width="1.3" stroke-linejoin="round"/><circle cx="1879" cy="66.8" r="1.6" fill="#999"/><circle cx="1904.9" cy="67" r="4.55" fill="none" stroke="#eee" stroke-width="3.30"/><path d="M1909.90 67.00L1911.65 67.00M1908.44 70.54L1909.67 71.77M1904.90 72.00L1904.90 73.75M1901.36 70.54L1900.13 71.77M1899.90 67.00L1898.15 67.00M1901.36 63.46L1900.13 62.23M1904.90 62.00L1904.90 60.25M1908.44 63.46L1909.67 62.23" stroke="#eee" stroke-width="2.90" stroke-linecap="round"/><path d="M1765 1009.5H1779M1765 1012.5H1779M1765 1016.5H1779M1765 1022.5H1779" stroke="#eee" stroke-width="1"/><path d="M1791.6 1010V1023.3H1799" fill="none" stroke="#eee" stroke-width="1.1"/><path d="M1793 1022.5V1014.5L1796.5 1010.5L1800 1014L1803.5 1012.5V1017.5H1800.5V1022.5z" fill="#eee"/><path d="M1793 1015L1796.8 1010.5L1800.5 1013.5L1804 1012L1806.5 1018" fill="none" stroke="#f4bb47" stroke-width="1.3"/><path d="M1803.6 1017.3V1024.7M1799.9 1021H1807.3" stroke="#f4bb47" stroke-width="1.3"/><path d="M1830.5 1015.8Q1838 1006 1845.8 1015.8Q1838 1025.5 1830.5 1015.8z" fill="none" stroke="#eee" stroke-width="1.5"/><circle cx="1838.2" cy="1015.3" r="3.3" fill="#eee"/><circle cx="1837.3" cy="1014.3" r="1" fill="#1e1e1e"/><path d="M1857.9 1010V1023.8M1872.1 1010V1023.8" stroke="#eee" stroke-width="2.1"/><path d="M1859.8 1017.3L1863.3 1014.5V1016.3H1866.7V1014.5L1870.2 1017.3L1866.7 1020.1V1018.3H1863.3V1020.1z" fill="#f4bb47"/><path d="M1896.3 1011.2H1908.5V1022.5H1896.3z" fill="#eee"/><path d="M1896.3 1014.3H1908.5M1896.3 1017.3H1908.5M1896.3 1020.2H1908.5M1899.3 1014.3V1022.5M1902.3 1014.3V1022.5M1905.3 1014.3V1022.5" stroke="#1e1e1e" stroke-width="0.7"/><path d="M1898.5 1009V1012.5M1906.3 1009V1012.5" stroke="#eee" stroke-width="1.6" stroke-linecap="round"/><path d="M1902 1018.9H1907.5V1016.9L1912.3 1020.3L1907.5 1023.8V1021.7H1902z" fill="#f4bb47"/><rect x="1846" y="1034.8" width="14" height="3.2" fill="#eee"/><rect x="1846" y="1039" width="3.5" height="10.1" fill="#eee"/><rect x="1851" y="1039" width="9" height="10.1" fill="#eee"/><path d="M1871 1034H1878L1881 1037V1045.7H1871z" fill="#eee"/><path d="M1878 1034V1037H1881z" fill="#888"/><path d="M1876.5 1038H1884L1887.5 1041.5V1050.5H1876.5z" fill="#eee" stroke="#1e1e1e" stroke-width="1"/><path d="M1884 1038.5V1041.5H1887z" fill="#888"/><circle cx="1905" cy="1042" r="4.55" fill="none" stroke="#eee" stroke-width="3.30"/><path d="M1910.00 1042.00L1911.75 1042.00M1908.54 1045.54L1909.77 1046.77M1905.00 1047.00L1905.00 1048.75M1901.46 1045.54L1900.23 1046.77M1900.00 1042.00L1898.25 1042.00M1901.46 1038.46L1900.23 1037.23M1905.00 1037.00L1905.00 1035.25M1908.54 1038.46L1909.77 1037.23" stroke="#eee" stroke-width="2.90" stroke-linecap="round"/><g transform="rotate(-45 41 1066)"><path d="M41.5 1063.5H37.5Q35 1063.5 35 1066Q35 1068.5 37.5 1068.5H39.5" fill="none" stroke="#eee" stroke-width="1.8"/><path d="M40.5 1068.5H44.5Q47 1068.5 47 1066Q47 1063.5 44.5 1063.5H42.5" fill="none" stroke="#eee" stroke-width="1.8"/></g><path d="M34.5 1060L37 1062M37.5 1059.2L38 1061.5M34 1063L36.3 1063.3M47.5 1072L45 1070M44.5 1072.8L44 1070.5M48 1069L45.7 1068.7" stroke="#eee" stroke-width="0.9"/><g transform="rotate(-45 59 1066)"><rect x="51" y="1063.2" width="9.5" height="5.6" rx="2.8" fill="none" stroke="#eee" stroke-width="1.8"/><rect x="57.5" y="1063.2" width="9.5" height="5.6" rx="2.8" fill="none" stroke="#eee" stroke-width="1.8"/></g><path d="M1795 1061.2V1059.8H1800V1061.2" fill="none" stroke="#f4a61c" stroke-width="1.3"/><rect x="1791.8" y="1061" width="11.4" height="1.8" fill="#f4a61c"/><rect x="1793" y="1063.5" width="9" height="9.5" rx="0.8" fill="#f4f4f4"/><path d="M1794.8 1065V1071.5M1796.6 1065V1071.5M1798.4 1065V1071.5M1800.2 1065V1071.5" stroke="#3d6590" stroke-width="0.9"/></svg>
</body></html>
